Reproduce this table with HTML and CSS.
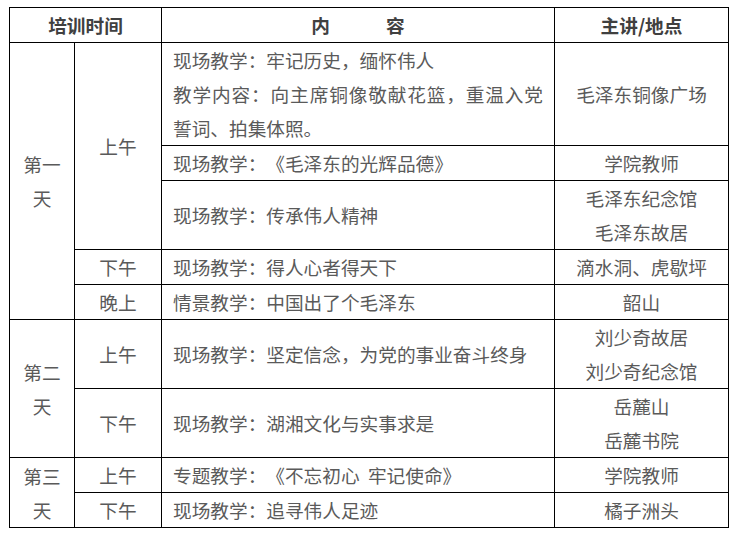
FILE: index.html
```html
<!DOCTYPE html>
<html lang="zh-CN">
<head>
<meta charset="utf-8">
<title>培训日程</title>
<link rel="stylesheet" href="styles.css">
</head>
<body>
<table class="schedule">
  <colgroup>
    <col class="c-day">
    <col class="c-time">
    <col class="c-content">
    <col class="c-place">
  </colgroup>
  <thead>
    <tr>
      <th colspan="2">培训时间</th>
      <th>内　　　容</th>
      <th>主讲/地点</th>
    </tr>
  </thead>
  <tbody>
    <tr>
      <td class="day" rowspan="5">第一天</td>
      <td class="time" rowspan="3">上午</td>
      <td class="content">现场教学：牢记历史，缅怀伟人<br>教学内容：向主席铜像敬献花篮，重温入党誓词、拍集体照。</td>
      <td class="place">毛泽东铜像广场</td>
    </tr>
    <tr>
      <td class="content">现场教学：《毛泽东的光辉品德》</td>
      <td class="place">学院教师</td>
    </tr>
    <tr>
      <td class="content">现场教学：传承伟人精神</td>
      <td class="place">毛泽东纪念馆<br>毛泽东故居</td>
    </tr>
    <tr>
      <td class="time">下午</td>
      <td class="content">现场教学：得人心者得天下</td>
      <td class="place">滴水洞、虎歇坪</td>
    </tr>
    <tr>
      <td class="time">晚上</td>
      <td class="content">情景教学：中国出了个毛泽东</td>
      <td class="place">韶山</td>
    </tr>
    <tr>
      <td class="day" rowspan="2">第二天</td>
      <td class="time">上午</td>
      <td class="content">现场教学：坚定信念，为党的事业奋斗终身</td>
      <td class="place">刘少奇故居<br>刘少奇纪念馆</td>
    </tr>
    <tr>
      <td class="time">下午</td>
      <td class="content">现场教学：湖湘文化与实事求是</td>
      <td class="place">岳麓山<br>岳麓书院</td>
    </tr>
    <tr>
      <td class="day" rowspan="2">第三天</td>
      <td class="time">上午</td>
      <td class="content">专题教学：《不忘初心&nbsp;&nbsp;牢记使命》</td>
      <td class="place">学院教师</td>
    </tr>
    <tr>
      <td class="time">下午</td>
      <td class="content">现场教学：追寻伟人足迹</td>
      <td class="place">橘子洲头</td>
    </tr>
  </tbody>
</table>
</body>
</html>
```

FILE: styles.css
```css
html, body {
  margin: 0;
  padding: 0;
  background: #ffffff;
}

body {
  padding: 7px 0 0 9px;
  font-family: "Noto Sans CJK SC", "Noto Sans", sans-serif;
  font-size: 18.67px;
  color: #5a5a5a;
  text-spacing-trim: space-all;
}

.schedule {
  border-collapse: collapse;
  table-layout: fixed;
  width: 719px;
}

.c-day { width: 65px; }
.c-time { width: 87px; }
.c-content { width: 393px; }
.c-place { width: 174px; }

.schedule th,
.schedule td {
  border: 1px solid #000000;
  padding: 0;
  line-height: 34px;
  vertical-align: middle;
}

.schedule th {
  font-weight: bold;
  color: #404040;
  text-align: center;
}

.schedule .day {
  text-align: center;
  padding: 0 10px;
}

.schedule .time {
  text-align: center;
}

.schedule .content {
  text-align: justify;
  padding: 0 11px;
}

.schedule .place {
  text-align: center;
}
```
